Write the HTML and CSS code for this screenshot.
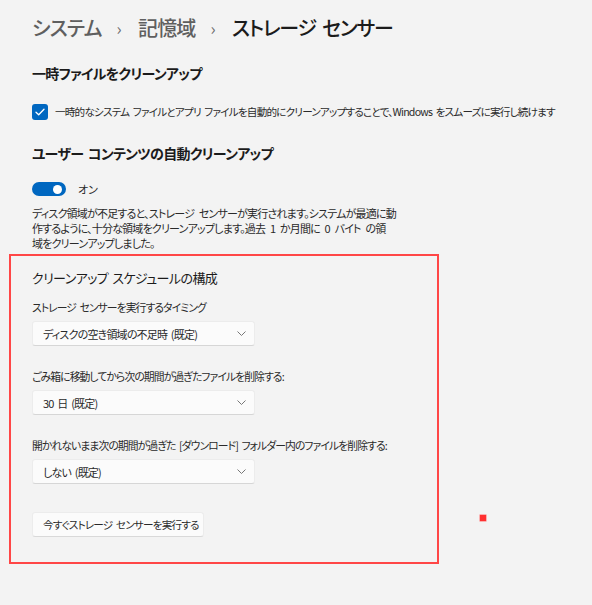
FILE: index.html
```html
<!DOCTYPE html>
<html lang="ja">

<head>
    <meta charset="UTF-8">
    <meta name="viewport" content="width=device-width, initial-scale=1.0">
    <title>ストレージ センサー</title>
    <link rel="stylesheet" href="styles.css">
</head>

<body>

    <div class="page">
        <div class="breadcrumb">
            <span class="crumb">システム</span>
            <span class="sep">&rsaquo;</span>
            <span class="crumb">記憶域</span>
            <span class="sep">&rsaquo;</span>
            <span class="crumb current">ストレージ センサー</span>
        </div>

        <h2 class="section-title first">一時ファイルをクリーンアップ</h2>
        <label class="check-row">
            <span class="checkbox">
                <svg width="10" height="8" viewBox="0 0 10 8">
                    <path d="M1 4.2 L3.7 6.8 L9 1.2" fill="none" stroke="#fff" stroke-width="1.3" stroke-linecap="round" stroke-linejoin="round" />
                </svg>
            </span>
            <span>一時的なシステム ファイルとアプリ ファイルを自動的にクリーンアップすることで、Windows をスムーズに実行し続けます</span>
        </label>

        <h2 class="section-title">ユーザー コンテンツの自動クリーンアップ</h2>
        <div class="toggle-row">
            <span class="toggle"><span class="knob"></span></span>
            <span>オン</span>
        </div>
        <p class="desc">ディスク領域が不足すると、ストレージ センサーが実行されます。システムが最適に動<br>作するように、十分な領域をクリーンアップします。過去 1 か月間に 0 バイト の領<br>域をクリーンアップしました。</p>
    </div>

    <div class="schedule">
        <h3 class="schedule-title">クリーンアップ スケジュールの構成</h3>

        <div class="field">
            <div class="field-label">ストレージ センサーを実行するタイミング</div>
            <div class="dropdown">
                <span>ディスクの空き領域の不足時 (既定)</span>
                <svg class="chevron" width="9" height="5" viewBox="0 0 9 5">
                    <path d="M0.5 0.5 L4.5 4.5 L8.5 0.5" fill="none" stroke="#777" stroke-width="1" />
                </svg>
            </div>
        </div>

        <div class="field">
            <div class="field-label">ごみ箱に移動してから次の期間が過ぎたファイルを削除する:</div>
            <div class="dropdown">
                <span>30 日 (既定)</span>
                <svg class="chevron" width="9" height="5" viewBox="0 0 9 5">
                    <path d="M0.5 0.5 L4.5 4.5 L8.5 0.5" fill="none" stroke="#777" stroke-width="1" />
                </svg>
            </div>
        </div>

        <div class="field">
            <div class="field-label">開かれないまま次の期間が過ぎた [ダウンロード] フォルダー内のファイルを削除する:</div>
            <div class="dropdown">
                <span>しない (既定)</span>
                <svg class="chevron" width="9" height="5" viewBox="0 0 9 5">
                    <path d="M0.5 0.5 L4.5 4.5 L8.5 0.5" fill="none" stroke="#777" stroke-width="1" />
                </svg>
            </div>
        </div>

        <button class="run-btn">今すぐストレージ センサーを実行する</button>
    </div>

    <!-- stray marker dot -->
    <span class="marker"></span>

</body>

</html>
```

FILE: styles.css
```css
/* Resetting styles */
* {
    margin: 0;
    padding: 0;
    box-sizing: border-box;
}

body {
    font-family: "Noto Sans CJK JP", "Noto Sans", sans-serif;
    font-feature-settings: "palt";
    background-color: #f3f3f3;
    color: #1b1b1b;
    position: relative;
    min-height: 100vh;
}

.page {
    padding: 13px 0 0 32px;
}

/* Breadcrumb */
.breadcrumb {
    display: flex;
    align-items: center;
    height: 30px;
    font-size: 20px;
    font-weight: 500;
    letter-spacing: -0.8px;
    word-spacing: 3px;
    line-height: 30px;
}

.crumb {
    color: #5f5f5f;
}

.crumb.current {
    color: #1b1b1b;
    letter-spacing: -1.2px;
}

.sep {
    color: #6a6a6a;
    font-size: 17px;
    font-weight: 400;
    margin: 0 17px 0 15px;
}

/* Sections */
.section-title {
    font-size: 14px;
    font-weight: 700;
    letter-spacing: -0.7px;
    word-spacing: 2px;
    line-height: 22px;
    margin-top: 22px;
}

.section-title.first {
    margin-top: 19px;
}

.check-row {
    display: flex;
    align-items: center;
    gap: 7px;
    margin-top: 19px;
    height: 17px;
    font-size: 10.6px;
    letter-spacing: -0.8px;
    word-spacing: 2px;
    white-space: nowrap;
    color: #2a2a2a;
}

.checkbox {
    width: 16px;
    height: 16px;
    border-radius: 3px;
    background-color: #0067c0;
    display: flex;
    align-items: center;
    justify-content: center;
}

.toggle-row {
    display: flex;
    align-items: center;
    gap: 12px;
    margin-top: 15px;
    height: 20px;
    font-size: 11px;
    color: #2a2a2a;
}

.toggle {
    width: 34px;
    height: 14px;
    border-radius: 7px;
    background-color: #0067c0;
    position: relative;
}

.toggle .knob {
    position: absolute;
    top: 2.5px;
    right: 4px;
    width: 9px;
    height: 9px;
    border-radius: 50%;
    background-color: #fff;
}

.desc {
    margin-top: 7px;
    font-size: 11px;
    letter-spacing: -0.8px;
    word-spacing: 3px;
    line-height: 15px;
    white-space: nowrap;
    color: #2a2a2a;
}

/* Schedule box */
.schedule {
    margin: 3px 0 0 9px;
    width: 430px;
    border: 2px solid #ff4646;
    padding: 12px 0 25px 21px;
}

.schedule-title {
    font-size: 13px;
    font-weight: 400;
    letter-spacing: -0.6px;
    word-spacing: 2px;
    line-height: 20px;
}

.field {
    margin-top: 11px;
}

.field + .field {
    margin-top: 22px;
}

.field-label {
    font-size: 10.8px;
    letter-spacing: -0.9px;
    word-spacing: 2px;
    line-height: 16px;
    white-space: nowrap;
    color: #2a2a2a;
}

.dropdown {
    margin-top: 6px;
    width: 223px;
    height: 25px;
    padding: 0 8px 0 10px;
    display: flex;
    align-items: center;
    justify-content: space-between;
    background-color: #fbfbfb;
    border: 1px solid #ececec;
    border-bottom-color: #d6d6d6;
    border-radius: 3px;
    font-size: 11px;
    letter-spacing: -0.8px;
    word-spacing: 2px;
    color: #2a2a2a;
}

.run-btn {
    margin-top: 28px;
    width: 172px;
    height: 25px;
    padding: 0 10px;
    font-family: inherit;
    font-feature-settings: "palt";
    font-size: 10.6px;
    letter-spacing: -0.8px;
    word-spacing: 2px;
    white-space: nowrap;
    text-align: left;
    color: #2a2a2a;
    background-color: #fbfbfb;
    border: 1px solid #ececec;
    border-bottom-color: #d9d9d9;
    border-radius: 3px;
}

.marker {
    position: absolute;
    left: 480px;
    top: 515px;
    width: 6px;
    height: 6px;
    background-color: #ff3030;
    box-shadow: 0 0 0 0.5px #ff7070;
}
```
